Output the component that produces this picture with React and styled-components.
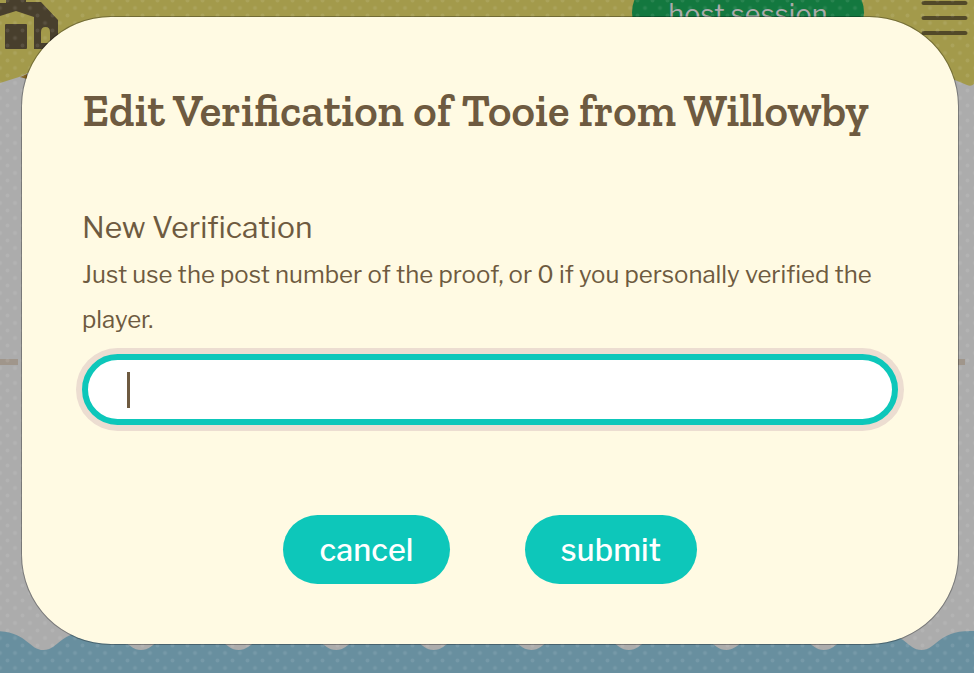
import React from 'react';
import styled, { createGlobalStyle } from 'styled-components';

const INK = '#6e5a40';
const TEAL = '#0dc7ba';

const GlobalStyle = createGlobalStyle`
  *, *::before, *::after { box-sizing: border-box; }
  body { margin: 0; overflow: hidden; background: #acacac; }
  button { font: inherit; }
`;

const Page = styled.div`
  position: relative;
  display: flex;
  flex-direction: column;
  height: 673px;
  overflow: hidden;
  background: #acacac;
  color: ${INK};
  font-family: 'Libre Franklin', Inter, 'Liberation Sans', sans-serif;
`;

const Scenery = styled.svg`
  display: block;
  flex: none;
  width: 974px;
  height: ${p => p.$height}px;
`;

const Divider = styled.div`
  display: flex;
  justify-content: space-between;
  width: 965px;
  margin: 269px 0 auto;
`;

const Dash = styled.span`
  width: 18px;
  height: 6px;
  background: #a0968b;
`;

const Dots = styled.div`
  position: absolute;
  inset: 0;
  background-image:
    radial-gradient(circle, rgba(255, 255, 255, 0.09) 1.5px, transparent 2.4px),
    radial-gradient(circle, rgba(255, 255, 255, 0.09) 1.5px, transparent 2.4px);
  background-size: 15px 15px;
  background-position: 0 8px, 7.5px 0.5px;
`;

const HostButton = styled.div`
  position: absolute;
  top: -22px;
  left: 632px;
  width: 232px;
  height: 69px;
  border-radius: 35px;
  background: #13783f;
  color: #aaaaaa;
  font-size: 27px;
  line-height: 73px;
  letter-spacing: 0.2px;
  text-align: center;
`;

const Dialog = styled.section`
  position: absolute;
  top: 16px;
  left: 21px;
  display: flex;
  flex-direction: column;
  width: 938px;
  height: 629px;
  padding: 67px 60px 60px;
  border: 1px solid rgba(0, 0, 0, 0.3);
  border-radius: 90px;
  background: #fffae3;
  background-clip: padding-box;
`;

const Title = styled.h1`
  margin: 0;
  padding-left: 0.5px;
  font: 600 45px/54px 'Zilla Slab', 'DejaVu Serif', serif;
  word-spacing: 0.3px;
  white-space: nowrap;
`;

const Field = styled.label`
  display: flex;
  flex-direction: column;
  margin-top: 67px;
`;

const FieldName = styled.span`
  font-size: 30px;
  line-height: 45px;
`;

const Hint = styled.span`
  margin-top: 2px;
  font-size: 24px;
  line-height: 45px;
`;

const InputFrame = styled.span`
  display: flex;
  align-items: center;
  height: 71px;
  margin-top: 12px;
  padding-left: 39px;
  border: 6px solid ${TEAL};
  border-radius: 36px;
  background: #fff;
  box-shadow: 0 0 0 6px #ecddd1;
`;

const Caret = styled.span`
  width: 3px;
  height: 36px;
  background: ${INK};
`;

const Actions = styled.div`
  display: flex;
  justify-content: center;
  gap: 75px;
  margin-top: 90px;
`;

const Action = styled.button`
  width: ${p => p.$width}px;
  height: 69px;
  padding: 2px 0 0;
  border: 0;
  border-radius: 35px;
  background: ${TEAL};
  color: #fff;
  font-size: 30.5px;
  font-weight: 500;
  line-height: 67px;
  letter-spacing: 0.15px;
`;

const crests = Array.from({ length: 11 }, (_, i) => -54 + i * 97.55);
const waves =
  `M${crests[0]} 25` +
  crests
    .map(x => `C${x + 15} 25 ${x + 16} 6 ${x + 48.8} 6C${x + 81.5} 6 ${x + 82.5} 25 ${x + 97.55} 25`)
    .join('') +
  'V60H-60Z';

export default function App() {
  return (
    <>
      <GlobalStyle />
      <Page>
        <Scenery $height={90} viewBox="0 0 974 90">
          <path d="M0 0H974V84Q971 87 967 85L950 78L30 72L19 77L0 83Z" fill="#a39a4b" />
          <path d="M20 77L27 74V79Z" fill="#80601f" />
          <g fill="#483f2d">
            <path d="M6 0H26V2H41L58 20V49H34V17L16 11L0 16V3H6Z" />
            <rect x="5" y="24" width="22" height="25" rx="1" />
          </g>
          <path d="M41 43V32Q41 27 45.500 27Q50 27 50 32V43Z" fill="#a39a4b" />
          <path d="M923.500 3H965.500M923.500 18H965.500M923.500 33H965.500" stroke="#524928" strokeWidth="4" strokeLinecap="round" />
        </Scenery>
        <Divider>
          <Dash />
          <Dash />
        </Divider>
        <Scenery $height={48} viewBox="0 0 974 48">
          <path d={waves} fill="#688f9f" />
        </Scenery>
        <HostButton>host session</HostButton>
        <Dots />
        <Dialog>
          <Title>Edit Verification of Tooie from Willowby</Title>
          <Field>
            <FieldName>New Verification</FieldName>
            <Hint>Just use the post number of the proof, or 0 if you personally verified the player.</Hint>
            <InputFrame>
              <Caret />
            </InputFrame>
          </Field>
          <Actions>
            <Action $width={167}>cancel</Action>
            <Action $width={172}>submit</Action>
          </Actions>
        </Dialog>
      </Page>
    </>
  );
}
